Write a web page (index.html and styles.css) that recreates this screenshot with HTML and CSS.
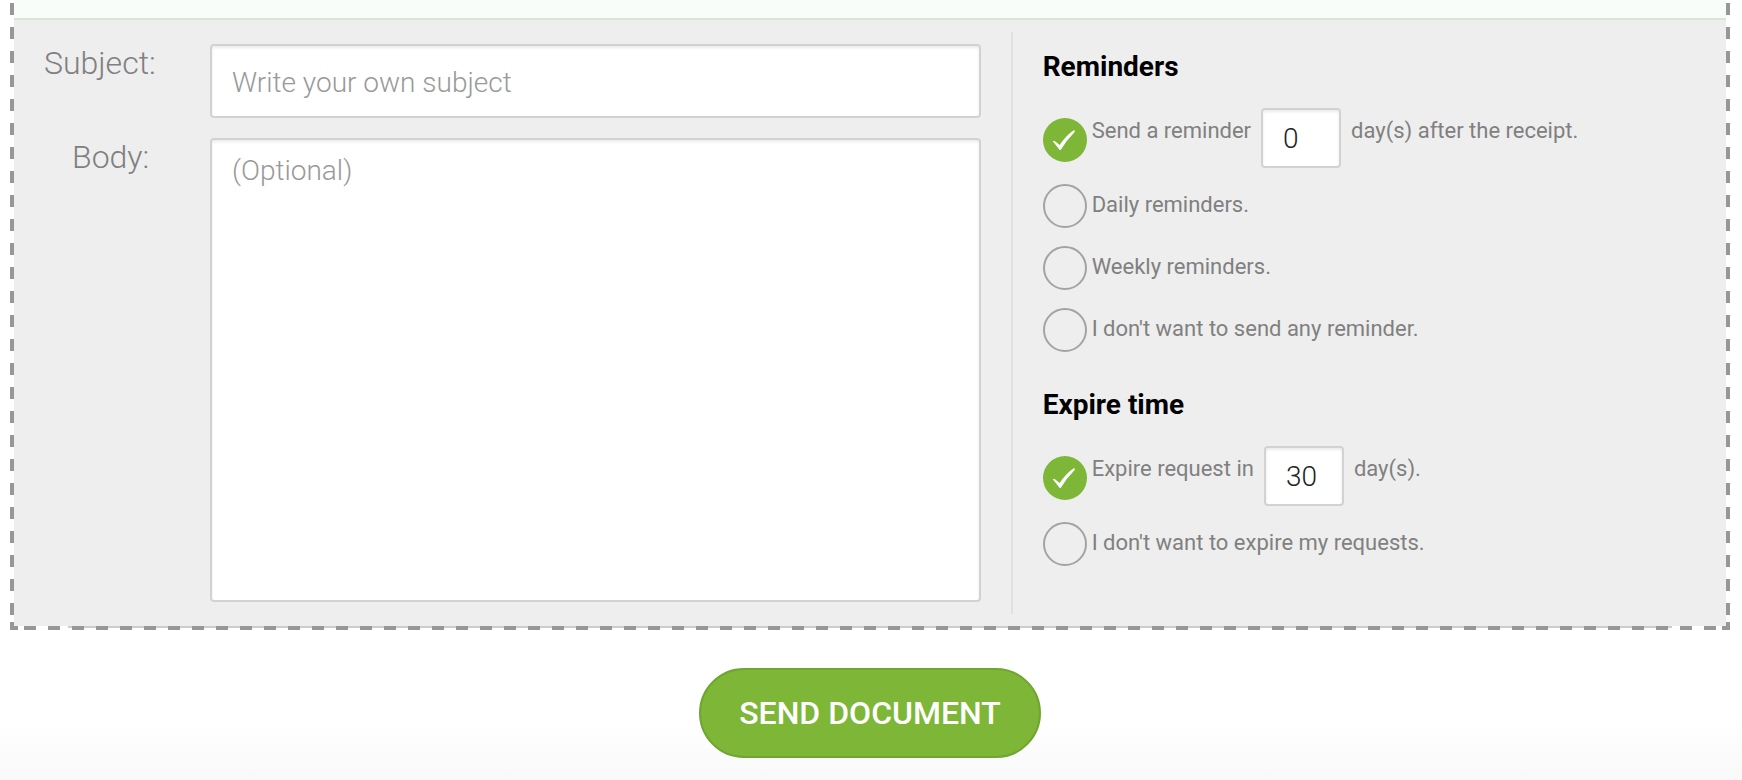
FILE: index.html
```html
<!DOCTYPE html>
<html lang="en">
<head>
  <meta charset="UTF-8" />
  <meta name="viewport" content="width=device-width, initial-scale=1.0" />
  <title>Send document</title>
  <link rel="stylesheet" href="styles.css">
</head>
<body>
  <form class="send-form">
    <div class="dashed-box">
      <div class="notice"></div>

      <div class="panel">
        <div class="message">
          <label class="label-subject" for="subject">Subject:</label>
          <input class="field subject" id="subject" type="text" placeholder="Write your own subject">
          <label class="label-body" for="body">Body:</label>
          <textarea class="field body-text" id="body" placeholder="(Optional)"></textarea>
        </div>

        <div class="settings">
          <section>
            <h2>Reminders</h2>
            <div class="option with-days">
              <input type="radio" name="reminder" id="reminder-days" checked>
              <label for="reminder-days">Send a reminder</label>
              <input class="field days" type="text" value="0" aria-label="Days after the receipt">
              <span>day(s) after the receipt.</span>
            </div>
            <div class="option">
              <input type="radio" name="reminder" id="reminder-daily">
              <label for="reminder-daily">Daily reminders.</label>
            </div>
            <div class="option">
              <input type="radio" name="reminder" id="reminder-weekly">
              <label for="reminder-weekly">Weekly reminders.</label>
            </div>
            <div class="option">
              <input type="radio" name="reminder" id="reminder-none">
              <label for="reminder-none">I don't want to send any reminder.</label>
            </div>
          </section>

          <section>
            <h2>Expire time</h2>
            <div class="option with-days">
              <input type="radio" name="expire" id="expire-days" checked>
              <label for="expire-days">Expire request in</label>
              <input class="field days" type="text" value="30" aria-label="Days until the request expires">
              <span>day(s).</span>
            </div>
            <div class="option">
              <input type="radio" name="expire" id="expire-none">
              <label for="expire-none">I don't want to expire my requests.</label>
            </div>
          </section>
        </div>
      </div>
    </div>

    <div class="actions">
      <button class="send" type="button">SEND DOCUMENT</button>
    </div>
  </form>
</body>
</html>
```
FILE: styles.css
```css
:root {
  --green: #7eb637;
  --green-dark: #70a530;
  --dash: #979797;
  --line: #d2d2d2;
  --text: #808080;
}

* {
  box-sizing: border-box;
}

body {
  margin: 0;
  font-family: Roboto, 'Liberation Sans', sans-serif;
  color: var(--text);
  background: #fff;
}

.send-form {
  min-height: 100vh;
  background: linear-gradient(to top, #f9f9f9, #fff 60px);
}

/* 12px dashes with 12px gaps, closed by solid corners at the bottom,
   and a thin grey line behind the bottom dashes */
.dashed-box {
  margin: 0 12px 0 10px;
  padding: 0 4px 4px;
  background:
    linear-gradient(var(--dash), var(--dash)) left bottom / 8px 4px no-repeat,
    linear-gradient(var(--dash), var(--dash)) left bottom / 4px 8px no-repeat,
    linear-gradient(var(--dash), var(--dash)) right bottom / 8px 4px no-repeat,
    linear-gradient(var(--dash), var(--dash)) right bottom / 4px 8px no-repeat,
    repeating-linear-gradient(transparent 0 3px, var(--dash) 3px 15px, transparent 15px 24px) left top / 4px 100% no-repeat,
    repeating-linear-gradient(transparent 0 3px, var(--dash) 3px 15px, transparent 15px 24px) right top / 4px 100% no-repeat,
    repeating-linear-gradient(to right, var(--dash) 0 2px, transparent 2px 14px, var(--dash) 14px 24px) left bottom / 100% 4px no-repeat,
    linear-gradient(#cdcdcd, #cdcdcd) center bottom 2px / calc(100% - 116px) 2px no-repeat,
    #fff;
}

.notice {
  height: 20px;
  background: #f8fdf9;
  border-bottom: 2px solid #d5e8d7;
}

.panel {
  display: grid;
  grid-template-columns: 7fr 5fr;
  padding: 12px 0;
  background: #eee;
}

.message {
  display: grid;
  grid-template-columns: 166px 1fr;
  grid-template-rows: 74px 464px;
  row-gap: 20px;
  padding: 12px 32px 12px 30px;
}

.message label {
  font-size: 32px;
  font-weight: 300;
  line-height: 38px;
}

.label-body {
  padding-left: 28px;
}

.field {
  width: 100%;
  margin: 0;
  border: 2px solid var(--line);
  border-radius: 4px;
  background: #fff;
  box-shadow: inset 0 2px 3px rgba(0, 0, 0, 0.08);
  color: #222;
  font-family: inherit;
  font-size: 28px;
  font-weight: 300;
  line-height: 32px;
  outline: none;
}

.field::placeholder {
  color: #999;
  opacity: 1;
}

.subject {
  padding: 4px 20px 0;
}

.body-text {
  padding: 15px 20px;
  resize: none;
}

.settings {
  display: flex;
  flex-direction: column;
  gap: 20px;
  margin-left: -2px;
  padding: 19px 20px 0 30px;
  border-left: 2px solid #e0e0e0;
}

h2 {
  margin: 0 0 25px;
  font-size: 28px;
  font-weight: 700;
  line-height: 32px;
  color: #000;
}

.option {
  display: flex;
  align-items: flex-start;
  padding-bottom: 16px;
  font-size: 22px;
  line-height: 46px;
}

.option:last-child {
  padding-bottom: 17px;
}

.option input[type='radio'] {
  appearance: none;
  flex: none;
  width: 44px;
  height: 44px;
  margin: 2px 5px 0 0;
  border: 2px solid #a3a3a3;
  border-radius: 50%;
}

.option input[type='radio']:checked {
  border: none;
  background: var(--green);
}

.option input[type='radio']:checked::after {
  content: '';
  display: block;
  width: 44px;
  height: 44px;
  background: #fff;
  clip-path: path('M10 23 L12 23 L17 27 Q23 18 30 13 L32 12 L32 14 Q24 22 18 32 L17 32 Z');
}

.with-days {
  padding-bottom: 14px;
}

.option.with-days input[type='radio'] {
  margin-top: 10px;
}

.days {
  flex: none;
  width: 80px;
  height: 60px;
  margin: 0 10px;
  padding: 0 20px;
}

.actions {
  display: flex;
  justify-content: center;
  padding: 38px 2px 22px 0;
}

.send {
  height: 90px;
  padding: 0 38px;
  border: 2px solid var(--green-dark);
  border-radius: 45px;
  background: var(--green);
  color: #fff;
  font-family: inherit;
  font-size: 32px;
  font-weight: 500;
}
```
